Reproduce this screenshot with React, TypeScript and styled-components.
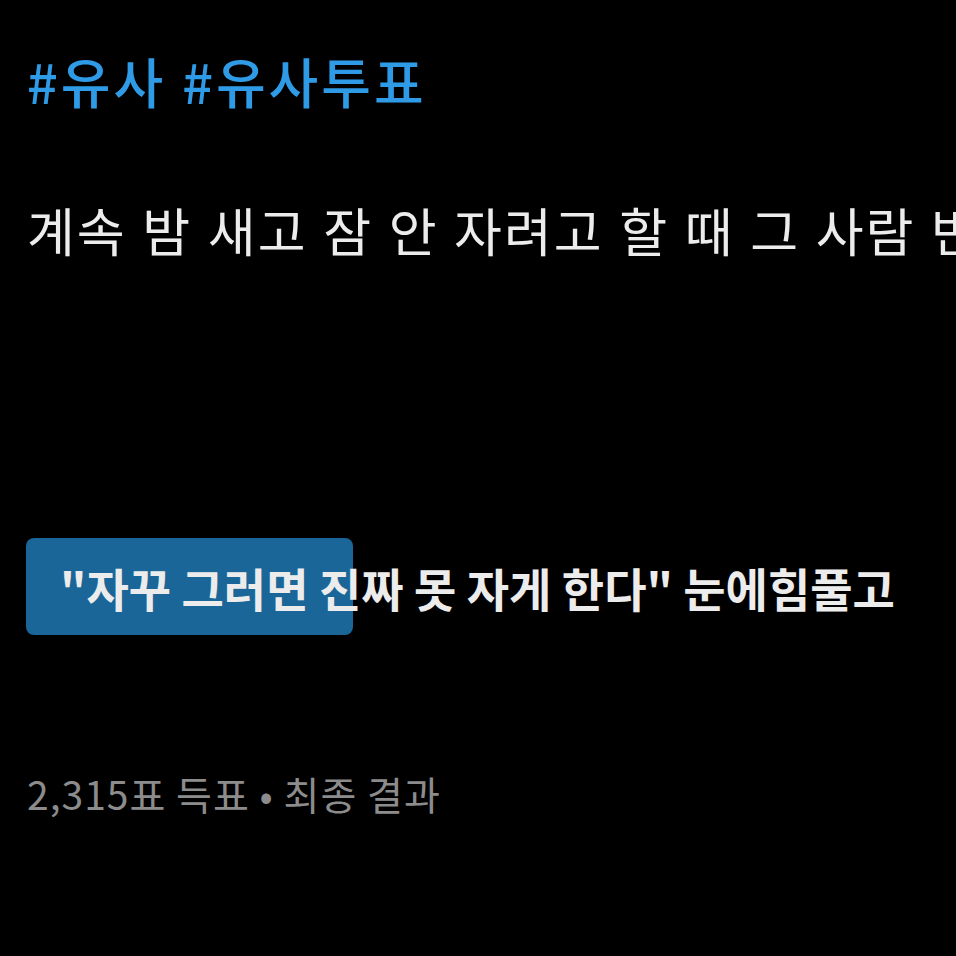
import React from "react"
import styled, { createGlobalStyle } from "styled-components"

// poll result card, dark theme

const GlobalStyle = createGlobalStyle`
  html, body {
    margin: 0;
    padding: 0;
    background: #000;
  }
  body {
    font-family: "Noto Sans CJK KR", "Noto Sans", sans-serif;
    overflow: hidden;
  }
`

const Page = styled.div`
  width: 956px;
  height: 956px;
  overflow: hidden;
  background: #000;
  box-sizing: border-box;
  padding: 49px 0 0 27px;
  display: flex;
  flex-direction: column;
`

const Tags = styled.div`
  display: flex;
  gap: 16px;
  color: #2f9be6;
  font-size: 54px;
  font-weight: 500;
  line-height: 64px;
  letter-spacing: 3px;
  white-space: nowrap;
`

const Question = styled.div`
  margin-top: 86px;
  color: #ececec;
  font-size: 52px;
  line-height: 62px;
  letter-spacing: 2px;
  word-spacing: 2px;
  white-space: nowrap;
`

interface IOption {
  top: number
}

const Option = styled.div<IOption>`
  position: relative;
  margin-top: ${(props) => props.top}px;
  margin-left: -1px;
  width: 1022px;
  height: 97px;
  display: flex;
  align-items: center;
  white-space: nowrap;
`

const Fill = styled.div`
  position: absolute;
  left: 0;
  top: 0;
  bottom: 0;
  background: #1a6698;
  border-radius: 8px;
`

const Label = styled.span`
  position: relative;
  padding-left: 34px;
  color: #ececec;
  font-size: 46px;
  font-weight: 700;
`

const Percent = styled.span`
  position: relative;
  margin-left: 64px;
  color: #ececec;
  font-size: 46px;
  font-weight: 700;
`

const Meta = styled.div`
  margin-top: 135px;
  color: #8c8c8c;
  font-size: 39px;
  line-height: 46px;
  letter-spacing: 1px;
  white-space: nowrap;
`

const poll = {
  label: "\"자꾸 그러면 진짜 못 자게 한다\" 눈에힘풀고",
  pct: 32,
  votes: "2,315",
}

export default function App() {
  return (
    <>
      <GlobalStyle />
      <Page>
        <Tags>
          <span>#유사</span>
          <span>#유사투표</span>
        </Tags>
        <Question>계속 밤 새고 잠 안 자려고 할 때 그 사람 반응은?</Question>
        <Option top={277}>
          <Fill style={{ width: `${poll.pct}%` }} />
          <Label>{poll.label}</Label>
          <Percent>{poll.pct}%</Percent>
        </Option>
        <Meta>{poll.votes}표 득표 • 최종 결과</Meta>
      </Page>
    </>
  )
}
